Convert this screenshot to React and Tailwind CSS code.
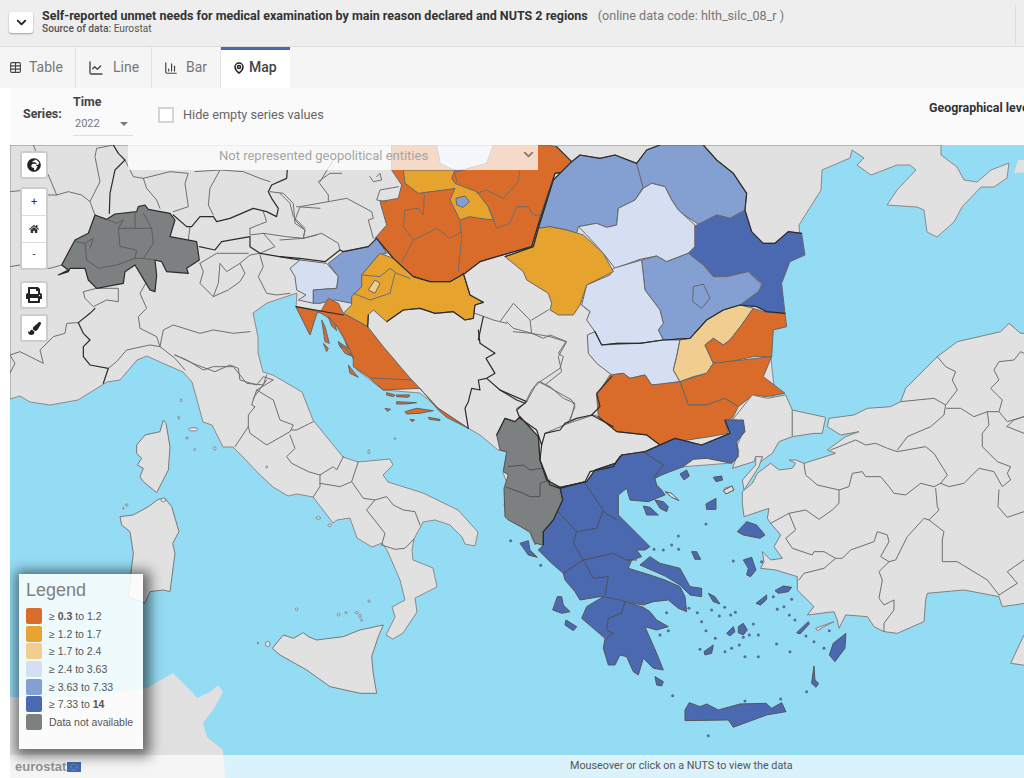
import React from "react";
import { ChevronDown, Table, ChartLine, ChartColumn, MapPin } from "lucide-react";
import { FaGlobeAfrica, FaHome, FaPrint, FaPaintBrush } from "react-icons/fa";

const SEA = "#94dbf4";
const LAND = "#e1e1e1";
const ORANGE = "#d96c2b";
const YELLOW = "#e6a42e";
const TAN = "#f2cd90";
const LIGHT = "#d5dff1";
const MID = "#849fd1";
const DARK = "#4a69b0";
const NODATA = "#7d8080";

// coast of the mainland, page pixels
const mainland =
  "10,399 20,396 30,402 50,405 78,400 107,382 120,380 137,360 147,356 160,362 183,372 192,382 197,400 203,422 212,425 223,447 233,447 243,457 258,473 273,487 288,496 297,494 313,497 323,510 333,523 337,520 350,518 357,538 372,547 382,543 387,550 400,580 405,600 392,607 395,617 386,635 393,639 403,633 417,612 415,598 437,587 433,568 413,560 412,550 414,539 423,522 435,520 450,525 462,537 465,544 475,546 478,532 458,510 423,493 388,482 383,475 393,465 390,459 358,462 343,457 313,420 302,392 273,375 263,372 258,353 258,337 253,313 267,303 297,293 296,307 310,335 317,313 325,312 335,323 343,337 353,357 357,370 383,390 420,393 438,408 468,428 480,435 498,450 507,452 503,473 508,485 504,505 507,517 530,533 535,545 560,520 620,480 680,467 732,463 730,420 775,395 770,350 770,320 775,280 790,250 800,237 799,225 821,190 822,170 850,158 852,150 864,158 857,165 871,175 897,165 910,165 916,170 897,190 887,205 917,207 924,210 927,232 937,237 954,222 962,207 981,187 994,187 1007,178 1009,163 991,170 977,182 964,180 957,167 941,155 941,145 10,145";

const northLines = {
  dark: [
    "340,15 355,40 375,60 345,90 330,160 328,220",
    "520,225 560,260 575,260 600,230 640,230 650,245 690,235 760,205 800,215 830,230 835,205 815,175 805,155 815,135 860,115 862,90",
    "598,320 645,330 665,305 750,290 750,320 780,340 870,355 900,360",
    "285,505 270,520 235,548 250,580 270,600 250,620 250,650 270,675 325,685 310,730",
  ],
  grey: [
    "100,15 120,65 145,105 170,165 205,155 245,165 270,185 285,225",
    "30,155 80,150 140,165 170,165",
    "270,185 300,125 285,50 290,25 340,15",
    "375,60 400,110 430,115 440,145 470,180 480,205",
    "430,115 510,95 565,100 555,130 565,200 520,215",
    "585,95 660,90 630,145 625,195 640,225",
    "660,90 730,95 780,115 810,125",
    "810,155 850,160 880,190 885,250 915,270 910,295 950,285",
    "890,200 960,205",
    "30,380 60,375 100,385 150,385 185,375",
    "750,265 800,245 790,215",
    "750,265 750,285 790,280 825,320 780,340",
    "790,280 860,290 910,295",
    "780,345 790,380 775,410 800,460 830,465 870,460",
    "600,370 610,395 600,430 640,470 655,430 660,370 680,395 720,370 735,400 720,425 685,450 640,470",
    "600,370 650,340 745,340",
    "720,370 750,345 780,340",
    "440,425 420,460 440,505 415,530 420,565 470,590 480,620 490,570 520,555 600,580 640,570 700,580 750,575",
    "290,445 355,445 355,485 320,480 280,500 255,475 250,455 290,445",
    "480,620 450,615 380,630 350,665 325,685",
    "480,620 525,655 555,690",
    "525,645 560,660 610,690 640,680 700,680 740,730 790,735 800,705",
    "30,645 60,635 110,660 130,670 120,630 160,590 195,580 200,550 235,548",
    "30,700 45,670 30,645",
    "800,720 760,775",
    "510,290 515,270",
    "570,260 565,300",
  ],
};

const swissInner = [
  "225,305 255,310 260,360 295,385 350,375 405,355 410,330 360,320 355,265 405,265 405,220",
  "405,265 455,265 460,310 430,355 465,360",
  "430,220 455,265",
  "320,238 350,250 370,240 355,265",
  "255,310 280,295 270,325",
  "405,355 430,355",
];

const italyLines = [
  "225,45 290,75 345,95 390,75 415,85 420,120 470,135 490,110 520,120 470,150 455,195 465,200 445,225 445,260 405,320",
  "470,150 520,180 540,240 580,255 570,275 500,315 450,280 445,260",
  "575,270 590,270 640,245",
  "570,285 585,325 560,350 575,370 625,395 660,405 700,380 710,390 730,350",
  "660,405 660,440 640,470",
  "660,430 720,440 755,425 775,365",
  "755,425 790,475 825,480 800,510 855,580 845,615",
  "825,480 860,470 880,495 910,510 945,515 960,555",
  "845,615 885,628 915,625 942,597",
];

const italyIslands = [
  "190,240 198,250 210,320 205,390 170,458 130,425 120,410 130,385 112,375 125,355 110,340 110,315 135,285 180,275",
  "195,475 215,500 237,575 218,610 225,640 210,755 190,750 150,755 135,790 85,770 95,680 100,640 90,575 65,555 60,530 100,525 145,500 175,478",
  "550,885 580,895 610,878 625,890 650,900 730,890 780,870 850,855 835,890 815,950 820,1000 830,1060 780,1060 690,1040 620,990 540,945 517,925",
];

const tinyIslands = [
  [243, 181, 3, 4], [236, 233, 2, 5], [280, 268, 15, 5], [261, 294, 4, 3], [284, 329, 3, 3], [344, 325, 4, 5],
  [500, 381, 3, 3], [655, 534, 7, 4], [689, 556, 5, 4], [590, 808, 4, 4], [716, 824, 4, 4], [738, 818, 3, 3],
  [770, 818, 5, 3], [780, 828, 4, 5], [785, 841, 3, 3], [807, 784, 3, 4], [503, 912, 7, 8], [474, 909, 2, 3],
  [807, 335, 3, 6], [885, 296, 3, 2], [80, 495, 4, 3], [70, 505, 2, 3], [190, 480, 7, 6],
];

const balkanShapes = [
  { fill: LIGHT, pts: "470,15 640,15 620,70 530,95 480,70" },
  { fill: MID, pts: "525,90 565,90 570,100 540,110" },
  { fill: ORANGE, pts: "285,295 320,255 300,185 355,175 365,135 335,90 335,15 470,15 480,70 530,95 620,70 640,15 800,15 830,20 875,65 865,95 825,100 780,230 770,270 755,320 650,350 600,365 555,400 510,425 450,425 400,410 340,355" },
  { fill: YELLOW, pts: "370,90 525,90 515,115 525,130 590,155 625,200 640,240 600,235 570,230 540,240 510,180 525,145 508,148 415,160 375,130" },
  { fill: MID, pts: "528,175 555,168 568,185 550,202 530,195" },
  { fill: LIGHT, pts: "30,385 60,360 140,370 175,410 170,445 100,450 100,490 55,480 78,465 50,450 45,410" },
  { fill: MID, pts: "145,370 190,335 265,320 290,295 320,340 295,345 245,405 245,440 215,475 215,490 165,480 120,490 100,490 100,450 170,445 175,410" },
  { fill: YELLOW, pts: "190,520 215,495 215,470 245,440 245,405 300,340 340,355 400,410 450,425 510,425 550,400 570,465 610,487 585,495 580,535 555,540 520,515 465,520 420,505 370,510 320,545 280,510 265,525 263,560" },
  { fill: TAN, pts: "265,450 285,420 300,430 285,460" },
  { fill: ORANGE, pts: "48,500 90,585 110,520 125,510 145,475 175,490 190,520 263,560 310,620 395,720 270,714 220,680 220,650 190,590 165,550 140,530 115,515 95,510" },
  { fill: ORANGE, pts: "125,540 135,560 148,610 135,605" },
  { fill: ORANGE, pts: "145,530 165,555 170,572 155,558" },
  { fill: ORANGE, pts: "175,610 195,625 215,648 195,640" },
  { fill: ORANGE, pts: "205,675 225,700 235,712 210,700" },
  { fill: ORANGE, pts: "130,610 145,625 140,635" },
];

const balkanLines = {
  grey: [
    "525,100 530,125",
    "720,90 715,125 670,175 620,150 590,160",
    "625,200 650,265 690,250 710,200 745,200 760,225 780,225",
    "540,245 545,295 535,395",
    "545,275 510,295 470,265 400,300 380,340 365,365",
    "400,300 370,260 375,210 415,205 430,225 433,165",
    "245,405 300,410 330,385 350,400 390,415",
    "220,460 270,480 330,460 345,400",
    "185,100 150,100 115,125 145,165 145,185 60,200 45,240 75,270 70,295",
    "145,185 200,175 275,215 280,235 265,240 280,295",
    "0,160 30,190 40,230 75,265",
    "290,110 300,100 305,120 280,125 270,110",
    "355,140 300,150 290,180 320,185",
    "160,60 120,125",
    "0,300 70,295 125,280 175,310 180,330",
    "585,520 640,540 680,550",
  ],
  dark: [
    "610,530 595,600",
    "290,295 340,355 400,410 450,425 510,425 555,400 600,365 650,350 755,320 770,270 825,100 865,95 875,65 830,20",
    "0,350 60,355 135,365 180,330 190,335 265,320 290,295",
    "48,500 190,525",
    "265,525 263,560",
    "550,400 570,465 610,487",
    "320,545 370,510 420,505 465,520 520,515 555,540 580,535 585,495 610,487",
  ],
};

const eastShapes = [
  { fill: MID, pts: "215,65 240,45 300,55 345,45 410,70 430,140 405,180 355,205 350,255 320,262 290,250 235,260 230,280 200,270 150,260 115,265 160,120 185,95" },
  { fill: MID, pts: "410,70 440,30 480,15 610,15 650,60 700,100 740,160 735,210 690,235 650,225 600,255 560,230 535,210 515,180 495,140 455,130 430,145" },
  { fill: LIGHT, pts: "430,145 455,130 495,140 515,180 535,210 585,255 585,320 565,340 500,365 470,348 420,358 345,385 310,340 260,285 235,260 290,250 320,262 350,255 355,205 405,180" },
  { fill: DARK, pts: "585,258 650,225 690,235 735,212 755,275 790,310 825,310 865,275 905,280 915,345 870,365 845,430 855,520 800,515 770,500 720,495 780,450 785,430 745,395 680,410 640,410 610,375 565,340 585,320" },
  { fill: MID, pts: "425,360 470,348 500,365 565,340 610,375 640,410 680,410 745,395 785,435 775,455 720,495 670,510 620,540 570,595 490,600 475,570 490,550 480,510 435,450" },
  { fill: MID, pts: "580,440 610,432 630,475 605,505 578,485" },
  { fill: LIGHT, pts: "425,360 340,385 330,405 260,435 245,495 270,515 260,540 285,575 305,615 350,610 420,610 490,600 475,570 490,550 480,510 435,450" },
  { fill: YELLOW, pts: "15,350 100,320 115,265 150,260 200,270 250,285 310,340 340,395 260,435 240,495 220,525 175,525 150,510 155,490 145,460 80,420 70,395" },
  { fill: LIGHT, pts: "262,585 285,575 305,615 420,610 490,600 540,600 530,650 520,690 540,725 480,735 455,735 435,705 390,715 370,700 335,705 290,670 265,640" },
  { fill: TAN, pts: "540,600 570,595 620,540 670,510 720,495 760,505 725,555 690,600 670,615 640,595 615,615 640,670 620,700 580,710 540,725 520,690 530,650" },
  { fill: ORANGE, pts: "760,505 790,515 855,520 860,560 820,570 815,650 760,650 690,665 640,670 615,615 640,595 670,615 690,600 725,555" },
  { fill: ORANGE, pts: "540,725 620,700 640,670 815,650 790,710 855,760 800,770 760,765 715,800 675,775 620,795 565,795" },
  { fill: ORANGE, pts: "330,705 370,700 390,715 435,705 455,735 540,725 565,795 620,795 675,775 715,800 700,830 675,845 685,880 630,890 530,905 480,915 440,885 350,875 295,830 290,765" },
];

const eastLines = {
  dark: [
    "215,65 240,45 300,55 345,45 410,70 440,30 480,15",
    "610,15 650,60 700,100 740,160 735,210 755,275 790,310 825,310 865,275 905,280",
    "215,65 185,95 160,120 115,265 100,320 15,350",
    "285,575 305,615 350,610 420,610 490,600 570,595 620,540 670,510 720,495 770,500 800,515 855,520",
    "0,750 50,780 75,790",
    "295,830 350,875 440,885 480,915",
  ],
  grey: [
    "0,545 40,490 90,540 95,580 130,595 150,585 200,605 175,650 185,695 135,735 115,725 95,750 75,790 50,805",
    "135,735 215,780 225,800 205,850 135,880",
    "95,540 145,510",
    "95,580 40,565 20,545",
    "205,850 280,825 295,830",
    "270,515 245,495",
  ],
};

const southShapes = [
  { fill: NODATA, pts: "50,105 75,55 105,65 120,50 175,110 180,180 200,240 240,262 248,300 220,360 190,395 190,435 165,430 150,395 85,360 75,350 72,265 85,225 70,215 80,155 60,150" },
  { fill: DARK, pts: "240,262 320,245 345,210 405,190 425,165 495,155 585,115 665,135 750,100 735,60 790,60 795,95 770,125 775,170 755,190 680,175 640,178 610,200 570,215 545,225 525,235 530,255 545,270 555,285 530,295 505,305 450,300 440,265 415,285 415,345 470,400 510,440 495,450 470,450 485,470 455,480 445,505 510,525 555,540 600,560 615,590 620,635 595,625 565,600 520,605 490,615 430,605 360,590 300,600 285,575 255,540 250,520 215,490 175,450 190,435 190,395 220,360 248,300" },
  { fill: DARK, pts: "480,495 510,470 540,490 600,505 630,560 665,565 665,590 630,585 600,555 555,528" },
  { fill: DARK, pts: "305,655 320,620 370,590 420,600 490,622 510,635 530,660 565,680 530,690 495,680 530,760 550,810 520,805 490,775 475,825 460,815 440,770 420,765 405,795 385,795 370,745 375,715 340,685" },
  { fill: LAND, pts: "555,275 575,280 597,302 575,292" },
  { fill: DARK, pts: "490,318 510,322 535,345 500,345" },
  { fill: DARK, pts: "525,300 550,305 565,320 560,335 540,325" },
  { fill: DARK, pts: "615,930 628,908 660,920 680,912 715,930 780,912 858,910 875,925 905,908 918,935 860,945 760,982 745,960 615,962" },
  { fill: DARK, pts: "1098,700 1095,745 1065,785 1048,765 1060,730" },
  { fill: DARK, pts: "772,395 800,365 830,375 855,405 840,415 790,405" },
  { fill: DARK, pts: "790,480 815,472 828,510 812,530 800,525 805,505" },
  { fill: DARK, pts: "678,312 708,295 708,328 680,328" },
  { fill: DARK, pts: "120,430 145,422 150,450 172,472 145,465" },
  { fill: DARK, pts: "232,590 245,590 250,615 270,635 245,640 218,630" },
  { fill: DARK, pts: "258,660 290,680 280,692 255,675" },
  { fill: DARK, pts: "600,222 620,210 628,228 612,240" },
  { fill: DARK, pts: "885,572 910,558 935,562 925,575 895,580" },
  { fill: DARK, pts: "828,610 860,585 860,598 842,615" },
  { fill: DARK, pts: "775,680 790,670 802,690 790,705 775,698" },
  { fill: DARK, pts: "995,850 1002,798 1005,840 1016,850 1008,862" },
  { fill: DARK, pts: "685,580 705,590 720,612 700,605" },
  { fill: DARK, pts: "950,698 985,665 988,672 960,702" },
  { fill: DARK, pts: "525,830 550,845 545,858 530,855" },
  { fill: DARK, pts: "672,755 700,735 695,760 675,765" },
  { fill: DARK, pts: "740,700 760,680 765,695 750,708" },
  { fill: DARK, pts: "635,455 650,455 662,478 645,478" },
  { fill: DARK, pts: "700,232 725,228 728,240 708,245" },
  { fill: LAND, pts: "730,272 755,258 762,270 738,282" },
];

const greekLines = [
  "315,250 370,330 350,385 290,395 235,335",
  "490,155 550,195 520,235",
  "370,335 410,360",
  "290,395 280,430 310,480 250,520",
  "310,480 340,535 385,530 375,585",
  "310,480 400,460 440,480 470,480",
  "435,605 425,640 385,655 380,690 400,700 380,715",
  "80,262 130,280 150,290 180,290 180,250 210,240",
  "85,200 130,195 150,210 185,205",
];

const greekDots = [
  [92, 422], [182, 496], [678, 372], [522, 448], [550, 450], [575, 435], [595, 408], [596, 448], [760, 483], [845, 485],
  [880, 590], [695, 630], [652, 638], [665, 665], [718, 648], [678, 692], [706, 715], [752, 645], [766, 637], [734, 622],
  [660, 748], [735, 755], [755, 745], [778, 735], [795, 770], [835, 770], [790, 712], [808, 705], [835, 705], [820, 672],
  [890, 732], [930, 755], [1032, 745], [978, 708], [1002, 725], [945, 660], [928, 645], [912, 620], [892, 628], [935, 598],
  [1048, 692], [578, 887], [795, 903], [902, 897], [685, 1007], [560, 638], [540, 705], [565, 692], [627, 625], [980, 875],
];

const turkeyShapes = [
  "25,300 85,225 130,235 185,225 205,270 205,350 165,365 145,400 110,425 115,410 95,410 90,425 25,445 45,395 40,375 60,330 40,300",
  "205,270 305,292 295,340 270,340 205,350",
  "315,295 390,285 430,265 500,260 530,245 545,205 640,110 700,65 830,35 855,10 890,40 1000,40 1000,835 870,855 835,860 825,830 720,810 610,820 605,840 600,905 520,940 480,935 450,920 430,890 365,885 345,925 340,900 330,875 250,885 270,860 220,810 220,770 155,750 110,745 120,725 115,695 140,720 175,715 150,680 170,645 140,610 130,595 135,565 60,590 55,550 55,515 85,490 100,460 140,430 165,450 205,445 215,430 195,420 215,420 240,430 335,400 310,390 365,350 405,335 350,345 310,320",
  "95,410 115,410 105,440 60,510 55,480 95,435",
  "1,505 25,498 28,510 5,520",
  "275,925 330,905 310,915 280,932",
  "860,1030 900,945 1000,900 1000,1050",
];

const turkeyLines = [
  "530,245 630,235 665,255 660,285 620,320 550,350 520,390",
  "640,110 665,140 695,155 685,180 700,210 665,255",
  "668,265 710,265 750,290 790,275 825,275 835,240 800,205 825,180 810,150 825,125 870,120 890,95 900,100",
  "825,275 850,305 900,290",
  "850,320 900,340",
  "790,275 795,315 775,340 775,380 820,425 860,440 850,460 860,480 835,500 810,455 765,445 720,490 675,500 650,490 670,465 630,400 605,380 520,395 490,385 455,370 425,375 395,360 320,390",
  "240,430 245,465 280,495 345,510 345,550 325,570 285,598 245,570 195,580 140,610",
  "345,510 375,500 385,460 415,455 425,470 470,470 495,500 510,520 545,525 590,490 630,500 650,490",
  "635,505 640,560 645,570 615,600 660,635 655,660 655,725 700,725 790,780 825,825",
  "615,600 600,595 550,650 515,720 495,725 465,755 475,780 465,835 480,855 510,840 510,870 480,910 480,935",
  "495,725 470,710 495,665 490,645 460,635 450,665 380,690 355,715 335,715 300,695 270,695 265,705 205,685 185,655 215,630 195,580",
  "335,715 300,745 240,760 225,780",
  "900,720 850,755 880,790 825,825",
  "848,320 870,300 900,290",
  "825,510 822,560 850,592 900,575",
];

const croatianIslands = [
  "735,0 850,50 936,120 1015,205 1105,265 1040,232 1015,210 960,145 850,150 810,115 765,65 745,30",
  "715,5 760,35 745,45 720,20",
  "860,158 885,165 880,170 860,165",
  "888,165 930,165 925,172 890,170",
  "890,185 950,188 920,192 890,192",
  "915,215 950,205 1000,212 960,220 920,222",
  "855,205 872,208 862,214",
  "930,238 944,240 936,245",
  "985,232 1020,238 1020,242 988,238",
];

function Polys({ items, stroke = "#666", width = 3 }) {
  return items.map((item, i) => (
    <polygon key={i} points={item.pts} fill={item.fill} stroke={stroke} strokeWidth={width} strokeLinejoin="round" />
  ));
}

function Lines({ items, stroke = "#6e6e6e", width = 3 }) {
  return items.map((pts, i) => (
    <polyline key={i} points={pts} fill="none" stroke={stroke} strokeWidth={width} strokeLinejoin="round" strokeLinecap="round" />
  ));
}

// each group uses the coordinates of a 3x crop of the map
function Crop({ x, y, children }) {
  return <g transform={`translate(${x} ${y}) scale(0.3333)`}>{children}</g>;
}

function EuropeMap() {
  return (
    <svg viewBox="10 145 1014 633" className="block h-full w-full blur-[0.35px]">
      <rect x="0" y="0" width="1024" height="778" fill={SEA} />
      <polygon points={mainland} fill={LAND} stroke="#8a8a8a" strokeWidth="1" strokeLinejoin="round" />
      <polygon
        points="10,697 90,697 147,688 173,673 193,693 197,698 210,692 218,685 223,692 213,710 203,723 207,737 223,750 225,778 10,778"
        fill={LAND}
      />
      <polygon points="1014,173 1018,160 1030,160 1030,172" fill={LAND} />

      <Crop x={100} y={340}>
        <Polys items={italyIslands.map((pts) => ({ pts, fill: LAND }))} stroke="#777" width={3} />
        {tinyIslands.map(([cx, cy, rx, ry], i) => (
          <ellipse key={i} cx={cx} cy={cy} rx={rx} ry={ry} fill={LAND} stroke="#666" strokeWidth="2" />
        ))}
        <Lines items={italyLines} />
        <Polys items={croatianIslands.map((pts) => ({ pts, fill: ORANGE }))} stroke="#555" width={2.5} />
      </Crop>

      <Crop x={0} y={140}>
        <Lines items={northLines.grey} />
        <Lines items={northLines.dark} stroke="#2b2b2b" width={3.6} />
        <polygon
          points="175,405 205,390 185,375 225,300 265,280 285,225 320,238 345,222 410,215 415,200 435,195 445,208 510,220 525,240 510,290 590,305 598,360 560,385 565,400 500,395 485,365 465,360 470,405 465,455 450,450 435,425 405,375 375,395 370,430 290,445 265,420 255,385 210,385 205,395"
          fill={NODATA}
          stroke="#2b2b2b"
          strokeWidth="3.6"
          strokeLinejoin="round"
        />
        <Lines items={swissInner} stroke="#5c5c5c" />
      </Crop>

      <Crop x={280} y={140}>
        <Polys items={balkanShapes} />
        <Lines items={balkanLines.grey} />
        <Lines items={balkanLines.dark} stroke="#2b2b2b" width={3.6} />
      </Crop>

      <Crop x={500} y={140}>
        <Polys items={eastShapes} />
        <Lines items={eastLines.grey} />
        <Lines items={eastLines.dark} stroke="#2b2b2b" width={3.6} />
      </Crop>

      <Crop x={724} y={320}>
        <Polys items={turkeyShapes.map((pts) => ({ pts, fill: LAND }))} stroke="#808080" />
        <Lines items={turkeyLines} />
      </Crop>

      <Crop x={480} y={400}>
        <Polys items={southShapes} stroke="#555" />
        {greekDots.map(([cx, cy], i) => (
          <circle key={i} cx={cx} cy={cy} r="4.5" fill="#566b9e" />
        ))}
        <Lines items={greekLines} stroke="#4f4f4f" />
        <Lines
          items={["50,105 75,55 105,65 120,50 175,110", "240,262 200,240 180,180 175,110", "425,165 495,155 585,115 665,135 750,100 735,60", "190,435 190,395 220,360 248,300 240,262 320,245 345,210 405,190 425,165"]}
          stroke="#2b2b2b"
          width={3.6}
        />
      </Crop>

      <Crop x={400} y={330}>
        <Lines
          items={[
            "235,0 240,40 285,70 258,85 285,130 260,145 235,150 240,180 215,175 205,215 195,235 205,295",
            "260,145 300,180 380,215 350,240 360,265",
            "360,265 410,300 425,345 435,310 480,300 495,280 530,265 575,255 640,290",
            "425,345 420,390 450,465 480,475 555,455 570,425 640,410 660,380",
            "575,255 600,230 590,190 635,140",
          ]}
          stroke="#2b2b2b"
          width={3.6}
        />
        <Lines
          items={[
            "380,215 405,170 420,155 450,170 490,205 525,220 510,275",
            "420,155 480,115 490,80 475,70 498,35 450,20 395,10 340,5",
          ]}
        />
      </Crop>
    </svg>
  );
}

const legendRows = [
  { color: "bg-[#d96c2b]", label: <>≥ <b>0.3</b> to 1.2</> },
  { color: "bg-[#e6a42e]", label: <>≥ 1.2 to 1.7</> },
  { color: "bg-[#f2cd90]", label: <>≥ 1.7 to 2.4</> },
  { color: "bg-[#d5dff1]", label: <>≥ 2.4 to 3.63</> },
  { color: "bg-[#849fd1]", label: <>≥ 3.63 to 7.33</> },
  { color: "bg-[#4a69b0]", label: <>≥ 7.33 to <b>14</b></> },
  { color: "bg-[#7d8080]", label: <>Data not available</> },
];

function Legend() {
  return (
    <div className="absolute left-[9px] bottom-[29px] h-[175px] w-[124px] bg-white/85 px-[7px] pt-[5px] shadow-[2px_2px_12px_5px_rgba(0,0,0,0.55)] font-['Liberation_Sans',sans-serif]">
      <div className="text-[18px] leading-[22px] text-[#808080]">Legend</div>
      <div className="mt-[7px] flex flex-col gap-[1.7px]">
        {legendRows.map((row, i) => (
          <div key={i} className="flex items-center gap-[7px]">
            <span className={`h-4 w-4 rounded-[2px] ${row.color}`} />
            <span className="text-[10.5px] leading-4 text-[#555]">{row.label}</span>
          </div>
        ))}
      </div>
    </div>
  );
}

function MapButton({ children, className = "" }) {
  return (
    <div className={`flex h-[28px] w-[28px] items-center justify-center border-2 border-[#ccc] bg-white rounded-[3px] text-[#222] ${className}`}>
      {children}
    </div>
  );
}

function MapControls() {
  return (
    <div className="absolute left-[10px] top-[6px] flex w-[28px] flex-col">
      <MapButton>
        <FaGlobeAfrica size={14} />
      </MapButton>
      <div className="mt-2 flex flex-col overflow-hidden rounded-[3px] border-2 border-[#ccc] bg-white text-[#333]">
        <span className="flex h-[27px] items-center justify-center text-[11px] border-b border-[#ddd]">+</span>
        <span className="flex h-[27px] items-center justify-center border-b border-[#ddd]">
          <FaHome size={10} />
        </span>
        <span className="flex h-[25px] items-center justify-center text-[11px]">-</span>
      </div>
      <MapButton className="mt-[11px]">
        <FaPrint size={16} />
      </MapButton>
      <MapButton className="mt-[5px]">
        <FaPaintBrush size={13} />
      </MapButton>
    </div>
  );
}

const tabs = [
  { name: "Table", Icon: Table, size: 13, box: "w-[76px] pl-[9px] gap-[7px]" },
  { name: "Line", Icon: ChartLine, size: 16, box: "w-[76px] pl-[12px] gap-[9px]" },
  { name: "Bar", Icon: ChartColumn, size: 14, box: "w-[69px] pl-[12px] gap-[8px]" },
];

export default function App() {
  return (
    <div className="flex h-[778px] w-[1024px] flex-col overflow-hidden bg-white font-['Roboto',sans-serif]">
      <header className="flex h-[47px] shrink-0 items-start border-b border-[#dcdcdc] bg-[#eeeeee] pl-[9px] pr-2 pt-[12px]">
        <button className="flex h-[21px] w-[24px] items-center justify-center rounded-[3px] bg-white shadow-[0_1px_2px_rgba(0,0,0,0.35)]">
          <ChevronDown size={15} strokeWidth={3} className="text-[#222]" />
        </button>
        <div className="ml-[9px] -mt-[4px]">
          <div className="flex items-baseline whitespace-nowrap text-[12.5px] leading-[15px]">
            <span className="font-bold text-[#333]">Self-reported unmet needs for medical examination by main reason declared and NUTS 2 regions</span>
            <span className="ml-[10px] text-[12.6px] text-[#777]">(online data code: hlth_silc_08_r )</span>
          </div>
          <div className="text-[10.2px] leading-[11px] text-[#555]">
            <span className="font-medium">Source of data:</span> Eurostat
          </div>
        </div>
        <div className="ml-auto -mt-[7px] h-[39px] w-px bg-[#dcdcdc]" />
      </header>

      <nav className="flex h-[41px] shrink-0 bg-[#f5f5f5]">
        {tabs.map(({ name, Icon, size, box }) => (
          <div key={name} className={`flex items-center border-r border-[#e2e2e2] text-[14px] text-[#777] ${box}`}>
            <Icon size={size} className="text-[#444]" />
            {name}
          </div>
        ))}
        <div className="flex w-[69px] items-center gap-1 border-t-[3px] border-[#4a69b0] bg-white pb-[3px] pl-[12px] text-[14px] font-medium text-[#444]">
          <MapPin size={12} strokeWidth={3} className="text-[#222]" />
          Map
        </div>
      </nav>

      <main className="ml-[10px] flex min-h-0 flex-1 flex-col">
        <section className="flex h-[57px] shrink-0 items-center overflow-hidden bg-[#fafafa] pl-[13px]">
          <span className="mb-[4px] w-[38px] shrink-0 text-[12.4px] font-bold text-[#444]">Series:</span>
          <div className="mb-[2px] ml-[12px] w-[60px] shrink-0">
            <div className="text-[12.4px] font-bold leading-[14px] text-[#444]">Time</div>
            <div className="mt-[8px] flex items-center justify-between border-b border-[#ddd] pb-[5px] pl-[2px] pr-[5px] text-[11px] leading-[13px] text-[#777]">
              2022
              <span className="border-x-[4px] border-t-[4px] border-x-transparent border-t-[#777]" />
            </div>
          </div>
          <span className="mb-[4px] ml-[25px] h-4 w-4 shrink-0 border-2 border-[#d4d4d4] bg-white" />
          <span className="mb-[4px] ml-[9px] w-[140px] shrink-0 whitespace-nowrap text-[12.7px] text-[#666]">Hide empty series values</span>
          <span className="mb-[17px] ml-[606px] shrink-0 whitespace-nowrap text-[12.4px] font-bold text-[#333]">Geographical level</span>
        </section>

        <section className="relative min-h-0 flex-1 overflow-hidden">
          <EuropeMap />
          <div className="absolute left-[118px] top-0 flex h-[25px] w-[410px] items-center bg-white/75 pb-[3px] pl-[91px] text-[13px] text-[#a5a5a5]">
            Not represented geopolitical entities
            <ChevronDown size={15} strokeWidth={3} className="absolute right-[2px] top-[2px] text-[#8a7b68]" />
          </div>
          <MapControls />
          <div className="absolute inset-x-0 bottom-0 flex h-[23px] items-center bg-white/65">
            <span className="ml-[5px] font-['Liberation_Sans',sans-serif] text-[13px] font-bold text-[#929292]">eurostat</span>
            <svg width="14" height="10" viewBox="0 0 14 10" className="ml-px">
              <rect width="14" height="10" fill="#3f6ab5" />
              <circle cx="7" cy="5" r="3" fill="none" stroke="#c9b458" strokeWidth="0.8" strokeDasharray="1 1" />
            </svg>
            <span className="absolute left-[560px] text-[10.8px] text-[#555]">Mouseover or click on a NUTS to view the data</span>
          </div>
          <Legend />
        </section>
      </main>
    </div>
  );
}
